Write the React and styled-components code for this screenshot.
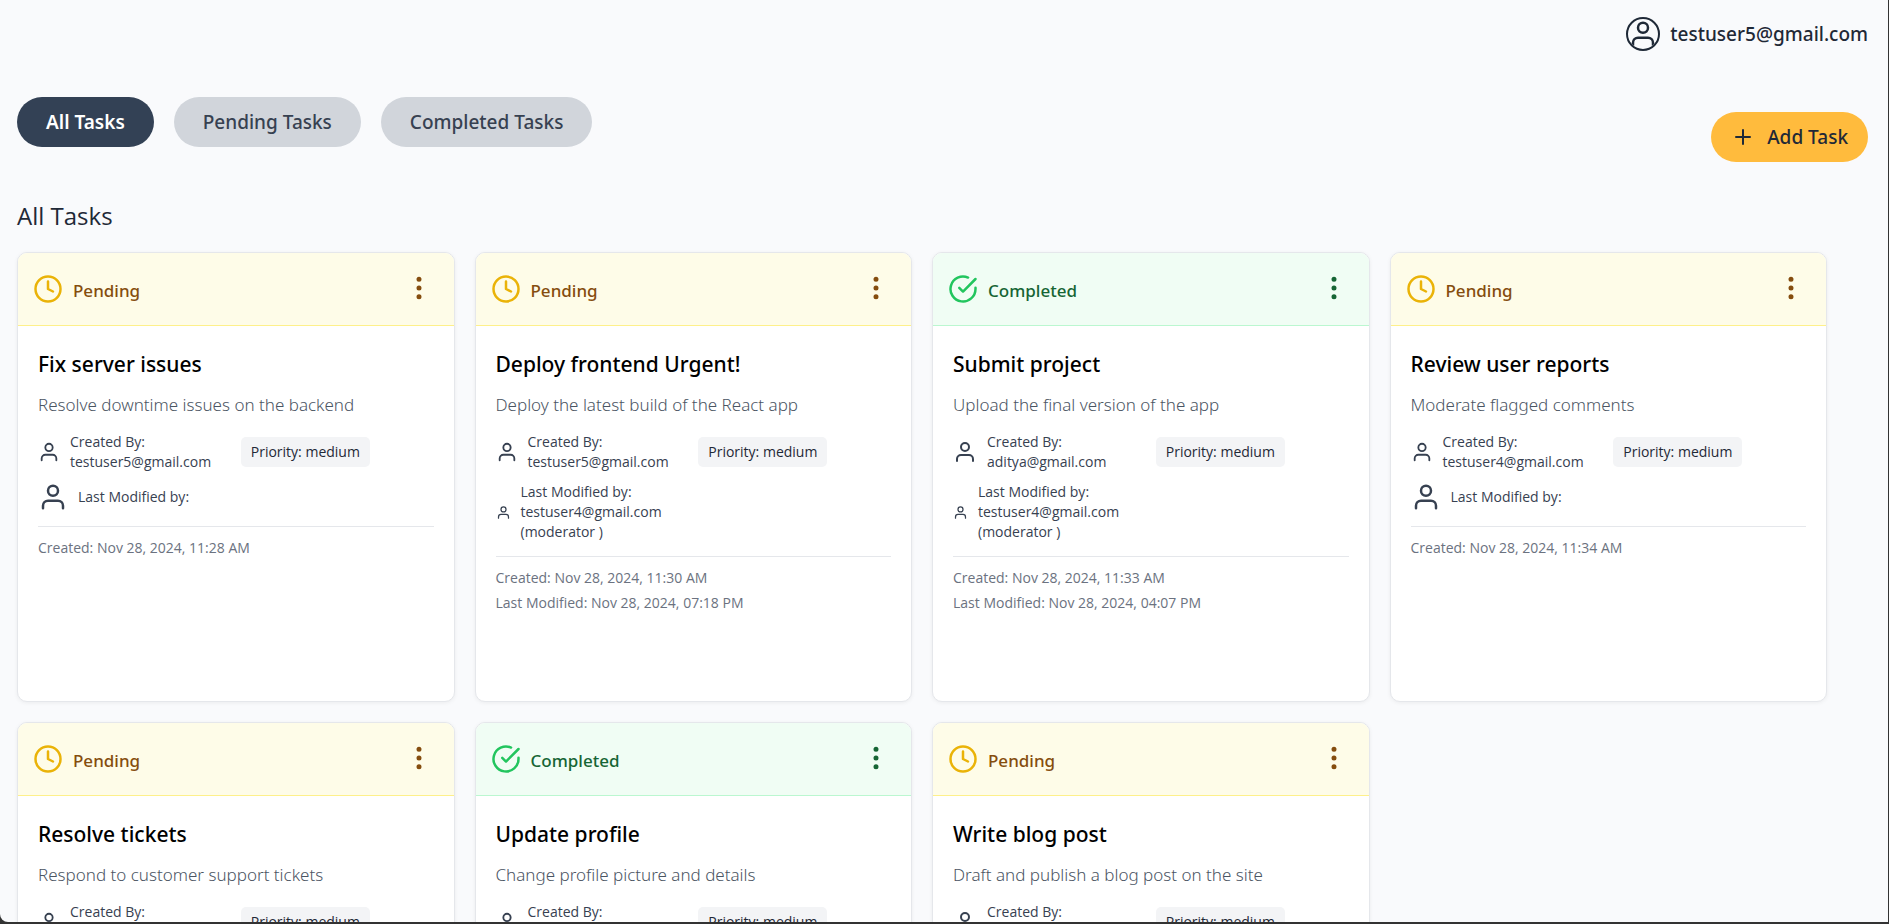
import React, { useState } from "react";
import styled, { createGlobalStyle, css } from "styled-components";
import { FiCheckCircle, FiClock, FiMoreVertical, FiPlus, FiUser } from "react-icons/fi";

const GlobalStyle = createGlobalStyle`
  *, *::before, *::after {
    box-sizing: border-box;
  }
  body {
    margin: 0;
    background: #333333;
    color: #1f2937;
    font-family: "Segoe UI", "Open Sans", "Noto Sans", sans-serif;
  }
  h1, h2, p {
    margin: 0;
  }
  button {
    font: inherit;
    border: none;
    cursor: pointer;
  }
`;

const statusColors = {
  Pending: { background: "#fefce8", line: "#fef08a", text: "#854d0e", icon: "#eab308" },
  Completed: { background: "#f0fdf4", line: "#bbf7d0", text: "#166534", icon: "#22c55e" },
};

const emphasis = css`
  font-family: "Segoe UI", "Noto Sans", "Open Sans", sans-serif;
  font-weight: 500;
`;

const Frame = styled.div`
  height: 100vh;
  overflow: hidden;
  border-right: 1px solid #333333;
  border-bottom: 2px solid #333333;
`;

const Page = styled.div`
  height: 100%;
  overflow: hidden;
  background: #f9fafc;
  border-bottom-left-radius: 8px;
`;

const TopBar = styled.header`
  display: flex;
  justify-content: flex-end;
  padding: 17px 20px 0;
`;

const Account = styled.a`
  ${emphasis}
  display: flex;
  align-items: center;
  gap: 10px;
  color: #1f2937;
  font-size: 19px;
  line-height: 32px;
  text-decoration: none;
`;

const Avatar = styled.span`
  display: flex;
  width: 34px;
  height: 34px;
  overflow: hidden;
  border: 2px solid #1f2937;
  border-radius: 50%;
`;

const Toolbar = styled.div`
  display: flex;
  justify-content: space-between;
  padding: 46px 20px 0 17px;
`;

const Tabs = styled.nav`
  display: flex;
  align-items: flex-start;
  gap: 20px;
`;

const pill = css`
  ${emphasis}
  height: 50px;
  border-radius: 25px;
  font-size: 19px;
  line-height: 24px;
`;

const Tab = styled.button`
  ${pill}
  padding: 0 29px;
  background: ${({ $active }) => ($active ? "#334155" : "#d1d5db")};
  color: ${({ $active }) => ($active ? "#ffffff" : "#374151")};
  font-weight: ${({ $active }) => ($active ? 600 : 500)};
`;

const AddButton = styled.button`
  ${pill}
  display: flex;
  align-items: center;
  gap: 12px;
  margin-top: 15px;
  padding: 0 20px;
  background: #ffbb3d;
  color: #1f2937;
`;

const Content = styled.main`
  padding: 36px 61px 20px 17px;
`;

const Heading = styled.h1`
  font-size: 24px;
  font-weight: 400;
  line-height: 36px;
`;

const CardGrid = styled.div`
  display: grid;
  grid-template-columns: repeat(4, minmax(0, 1fr));
  gap: 20px;
  margin-top: 18px;
`;

const Card = styled.article`
  min-height: 450px;
  overflow: hidden;
  background: #ffffff;
  border: 1px solid #e5e7eb;
  border-radius: 10px;
  box-shadow: 0 1px 4px rgba(0, 0, 0, 0.06);
`;

const CardHeader = styled.div`
  display: flex;
  align-items: center;
  justify-content: space-between;
  height: 73px;
  padding: 0 20px 0 15px;
  background: ${({ $status }) => statusColors[$status].background};
  border-bottom: 1px solid ${({ $status }) => statusColors[$status].line};
  color: ${({ $status }) => statusColors[$status].text};
`;

const Status = styled.div`
  ${emphasis}
  display: flex;
  align-items: center;
  gap: 10px;
  font-size: 17px;

  svg {
    color: ${({ $status }) => statusColors[$status].icon};
  }

  span {
    padding-top: 2px;
  }
`;

const MenuButton = styled.button`
  display: flex;
  padding: 0 0 2px;
  background: none;
  color: inherit;
`;

const CardBody = styled.div`
  padding: 20px;
`;

const Title = styled.h2`
  ${emphasis}
  color: #000000;
  font-size: 21px;
  line-height: 36px;
`;

const Description = styled.p`
  margin-top: 10px;
  color: #4b5563;
  font-family: "Segoe UI", "Noto Sans", "Open Sans", sans-serif;
  font-size: 17px;
  font-weight: 300;
  line-height: 25px;
`;

const Details = styled.div`
  display: grid;
  grid-template-columns: 1fr 1fr;
  align-items: center;
  justify-items: start;
  gap: 10px;
  margin-top: 15px;
`;

const Person = styled.div`
  display: flex;
  align-items: center;
  gap: 10px;
  color: #374151;
  font-size: 14px;
  line-height: 20px;

  svg {
    flex-shrink: 0;
  }

  span {
    display: block;
    white-space: nowrap;
  }
`;

const Priority = styled.div`
  padding: 5px 10px;
  background: #f3f4f6;
  border-radius: 5px;
  color: #1f2937;
  font-size: 14px;
  line-height: 20px;
  white-space: nowrap;
`;

const Dates = styled.div`
  display: grid;
  gap: 5px;
  margin-top: 14px;
  padding-top: 11px;
  border-top: 1px solid #e5e7eb;
  color: #6b7280;
  font-size: 14px;
  line-height: 20px;
`;

const tasks = [
  {
    title: "Fix server issues",
    description: "Resolve downtime issues on the backend",
    status: "Pending",
    author: "testuser5@gmail.com",
    authorIcon: 22,
    created: "Nov 28, 2024, 11:28 AM",
  },
  {
    title: "Deploy frontend Urgent!",
    description: "Deploy the latest build of the React app",
    status: "Pending",
    author: "testuser5@gmail.com",
    authorIcon: 22,
    editor: "testuser4@gmail.com",
    created: "Nov 28, 2024, 11:30 AM",
    modified: "Nov 28, 2024, 07:18 PM",
  },
  {
    title: "Submit project",
    description: "Upload the final version of the app",
    status: "Completed",
    author: "aditya@gmail.com",
    authorIcon: 24,
    editor: "testuser4@gmail.com",
    created: "Nov 28, 2024, 11:33 AM",
    modified: "Nov 28, 2024, 04:07 PM",
  },
  {
    title: "Review user reports",
    description: "Moderate flagged comments",
    status: "Pending",
    author: "testuser4@gmail.com",
    authorIcon: 22,
    created: "Nov 28, 2024, 11:34 AM",
  },
  {
    title: "Resolve tickets",
    description: "Respond to customer support tickets",
    status: "Pending",
    author: "testuser5@gmail.com",
    authorIcon: 22,
    created: "Nov 28, 2024, 11:35 AM",
  },
  {
    title: "Update profile",
    description: "Change profile picture and details",
    status: "Completed",
    author: "testuser5@gmail.com",
    authorIcon: 22,
    created: "Nov 28, 2024, 11:36 AM",
  },
  {
    title: "Write blog post",
    description: "Draft and publish a blog post on the site",
    status: "Pending",
    author: "aditya@gmail.com",
    authorIcon: 24,
    created: "Nov 28, 2024, 11:37 AM",
  },
];

const filters = ["All Tasks", "Pending Tasks", "Completed Tasks"];

function TaskCard({ task }) {
  const StatusIcon = task.status === "Completed" ? FiCheckCircle : FiClock;
  return (
    <Card>
      <CardHeader $status={task.status}>
        <Status $status={task.status}>
          <StatusIcon size={30} />
          <span>{task.status}</span>
        </Status>
        <MenuButton type="button" aria-label={`Options for ${task.title}`}>
          <FiMoreVertical size={30} />
        </MenuButton>
      </CardHeader>
      <CardBody>
        <Title>{task.title}</Title>
        <Description>{task.description}</Description>
        <Details>
          <Person>
            <FiUser size={task.authorIcon} />
            <div>
              <span>Created By:</span>
              <span>{task.author}</span>
            </div>
          </Person>
          <Priority>Priority: medium</Priority>
          <Person>
            <FiUser size={task.editor ? 15 : 30} />
            <div>
              <span>Last Modified by:</span>
              {task.editor && <span>{task.editor}</span>}
              {task.editor && <span>(moderator )</span>}
            </div>
          </Person>
        </Details>
        <Dates>
          <p>Created: {task.created}</p>
          {task.modified && <p>Last Modified: {task.modified}</p>}
        </Dates>
      </CardBody>
    </Card>
  );
}

export default function App() {
  const [filter, setFilter] = useState("All Tasks");
  const visible = tasks.filter(
    (task) => filter === "All Tasks" || filter.startsWith(task.status)
  );

  return (
    <>
      <GlobalStyle />
      <Frame>
        <Page>
          <TopBar>
            <Account href="#account">
              <Avatar>
                <FiUser size={30} />
              </Avatar>
              testuser5@gmail.com
            </Account>
          </TopBar>
          <Toolbar>
            <Tabs>
              {filters.map((name) => (
                <Tab
                  key={name}
                  type="button"
                  $active={name === filter}
                  onClick={() => setFilter(name)}
                >
                  {name}
                </Tab>
              ))}
            </Tabs>
            <AddButton type="button">
              <FiPlus size={24} />
              Add Task
            </AddButton>
          </Toolbar>
          <Content>
            <Heading>{filter}</Heading>
            <CardGrid>
              {visible.map((task) => (
                <TaskCard key={task.title} task={task} />
              ))}
            </CardGrid>
          </Content>
        </Page>
      </Frame>
    </>
  );
}
